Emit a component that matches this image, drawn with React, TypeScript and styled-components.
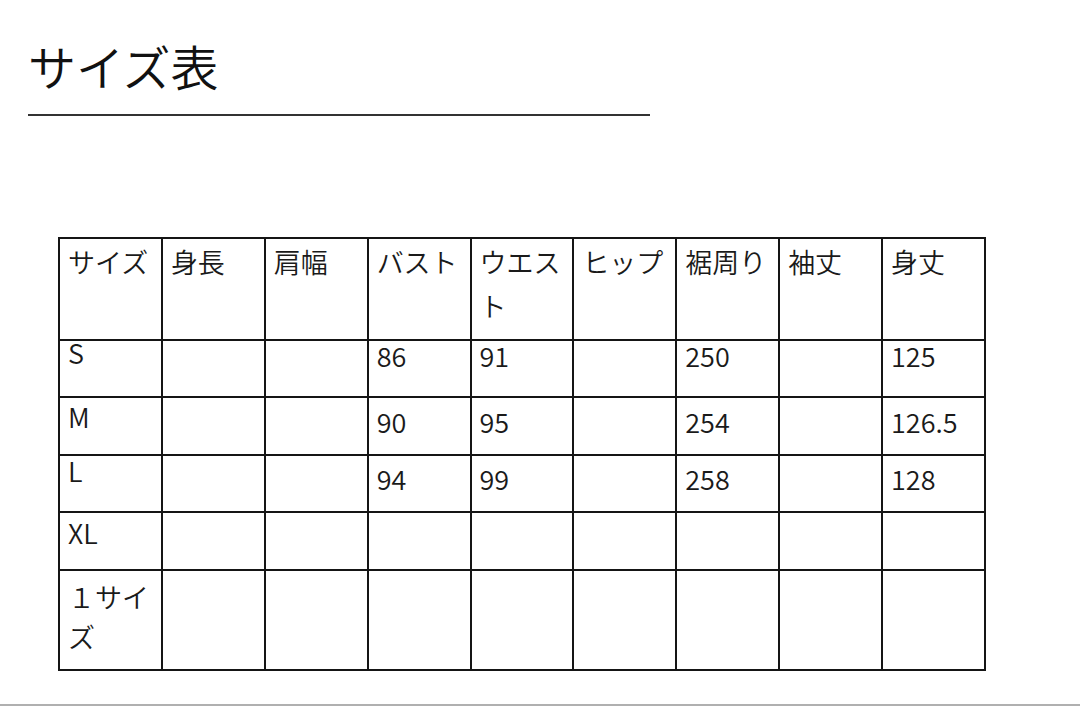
import React from 'react';
import styled, { createGlobalStyle } from 'styled-components';

type Row = {
  label: string;
  values: string[];
  height: number;
  pad: number;
  labelPad: number;
  lh: number;
};

const headers = ['サイズ', '身長', '肩幅', 'バスト', 'ウエスト', 'ヒップ', '裾周り', '袖丈', '身丈'];

const rows: Row[] = [
  { label: 'S', values: ['', '', '86', '91', '', '250', '', '125'], height: 57, pad: 3, labelPad: 0, lh: 24 },
  { label: 'M', values: ['', '', '90', '95', '', '254', '', '126.5'], height: 58, pad: 12, labelPad: 7, lh: 24 },
  { label: 'L', values: ['', '', '94', '99', '', '258', '', '128'], height: 57, pad: 11, labelPad: 3, lh: 24 },
  { label: 'XL', values: ['', '', '', '', '', '', '', ''], height: 58, pad: 8, labelPad: 8, lh: 24 },
  { label: '１サイズ', values: ['', '', '', '', '', '', '', ''], height: 100, pad: 6, labelPad: 6, lh: 40 },
];

const SizeChart: React.FC = () => {
  return (
    <Page>
      <Title>サイズ表</Title>
      <Rule />
      <TableBox>
        <Table>
          <colgroup>
            {headers.map((h) => (
              <col key={h} style={{ width: `${100 / headers.length}%` }} />
            ))}
          </colgroup>
          <thead>
            <tr>
              {headers.map((h) => (
                <Th key={h}>{h}</Th>
              ))}
            </tr>
          </thead>
          <tbody>
            {rows.map((row) => (
              <Tr key={row.label} $h={row.height}>
                <Td $pad={row.labelPad} $lh={row.lh}>
                  {row.label}
                </Td>
                {row.values.map((v, i) => (
                  <Td key={i} $pad={row.pad} $lh={row.lh}>
                    {v}
                  </Td>
                ))}
              </Tr>
            ))}
          </tbody>
        </Table>
      </TableBox>
      <BottomLine />
    </Page>
  );
};

export default function App() {
  return (
    <>
      <GlobalStyle />
      <SizeChart />
    </>
  );
}

// Styles
const GlobalStyle = createGlobalStyle`
  html, body {
    margin: 0;
    padding: 0;
    background: #fff;
  }
  body {
    font-family: 'Noto Sans CJK JP', 'Noto Sans', sans-serif;
    font-weight: 350;
    color: #1a1a1a;
  }
`;

const Page = styled.div`
  width: 1080px;
  height: 706px;
  display: flex;
  flex-direction: column;
  overflow: hidden;
`;

const Title = styled.h1`
  margin: 41px 0 0 28px;
  font-size: 48px;
  line-height: 48px;
  font-weight: 350;
  color: #111;
`;

const Rule = styled.div`
  margin: 25px 0 0 28px;
  width: 622px;
  height: 2px;
  background: #333;
`;

const TableBox = styled.div`
  margin: 121px 0 0 58px;
  width: 928px;
`;

const Table = styled.table`
  width: 100%;
  table-layout: fixed;
  border-collapse: collapse;
  font-size: 27px;
  font-weight: 350;
  color: #1a1a1a;
`;

const Th = styled.th`
  height: 102px;
  box-sizing: border-box;
  border: 2px solid #151515;
  padding: 1px 4px 0 8px;
  text-align: left;
  vertical-align: top;
  font-weight: 350;
  line-height: 44px;
`;

const Tr = styled.tr<{ $h: number }>`
  height: ${(p) => p.$h}px;
`;

const Td = styled.td<{ $pad: number; $lh: number }>`
  box-sizing: border-box;
  border: 2px solid #151515;
  padding: ${(p) => p.$pad}px 4px 0 8px;
  vertical-align: top;
  line-height: ${(p) => p.$lh}px;
  white-space: normal;
`;

const BottomLine = styled.div`
  margin-top: auto;
  margin-bottom: 0;
  height: 2px;
  background: #b0b0b0;
`;
